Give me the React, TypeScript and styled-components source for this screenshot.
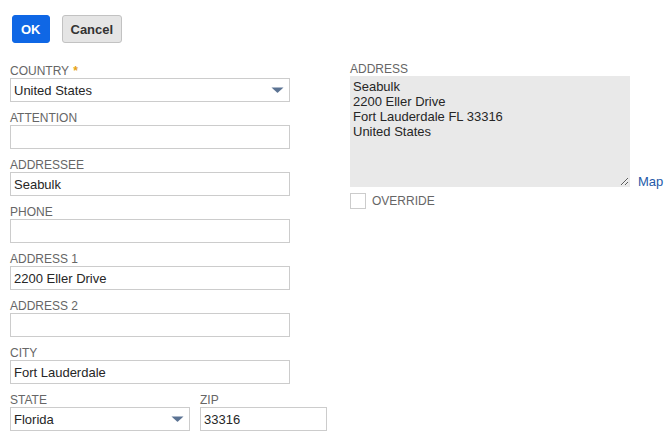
import React from "react";
import styled, { createGlobalStyle } from "styled-components";

const Global = createGlobalStyle`
  html, body { margin: 0; padding: 0; background: #fff; }
  body { font-family: "Liberation Sans", Arial, sans-serif; color: #262626; }
  * { box-sizing: border-box; }
`;

const Page = styled.div`
  padding: 15px 10px 0 10px;
`;

const Toolbar = styled.div`
  display: flex;
  gap: 12px;
  padding-left: 2px;
  height: 28px;
`;

const Button = styled.button<{ $primary?: boolean }>`
  height: 28px;
  padding: 0 8px;
  border-radius: 3px;
  font-family: "Liberation Sans", Arial, sans-serif;
  font-size: 13px;
  font-weight: bold;
  cursor: pointer;
  border: 1px solid ${(p) => (p.$primary ? "#0f67e5" : "#c2c2c2")};
  background: ${(p) => (p.$primary ? "#0f67e5" : "#e5e5e5")};
  color: ${(p) => (p.$primary ? "#ffffff" : "#333333")};
`;

const Columns = styled.div`
  display: flex;
  gap: 60px;
  margin-top: 19px;
`;

const LeftCol = styled.div`
  width: 280px;
  flex-shrink: 0;
  padding-top: 2px;
  display: flex;
  flex-direction: column;
  gap: 9px;
`;

const RightCol = styled.div`
  display: flex;
  flex-direction: column;
`;

const Field = styled.div<{ $width?: number }>`
  display: flex;
  flex-direction: column;
  flex-shrink: 0;
  width: ${(p) => (p.$width ? `${p.$width}px` : "100%")};
`;

const Label = styled.div`
  font-size: 12px;
  line-height: 14px;
  color: #666;
  text-transform: uppercase;
  white-space: nowrap;
`;

const Required = styled.span`
  color: #e6a213;
  font-weight: bold;
  margin-left: 4px;
`;

const TextInput = styled.input`
  height: 24px;
  width: 100%;
  border: 1px solid #ccc;
  padding: 0 3px;
  font-family: "Liberation Sans", Arial, sans-serif;
  font-size: 13px;
  color: #262626;
  background: #fff;
  outline: none;
`;

const Select = styled.div`
  height: 24px;
  width: 100%;
  border: 1px solid #ccc;
  padding: 0 5px 0 3px;
  display: flex;
  align-items: center;
  justify-content: space-between;
  font-size: 13px;
  color: #262626;
  background: #fff;
`;

const Row = styled.div`
  display: flex;
  gap: 10px;
`;

const AddressRow = styled.div`
  display: flex;
  align-items: flex-end;
  gap: 8px;
`;

const AddressBox = styled.textarea`
  width: 280px;
  height: 111px;
  border: 1px solid #e9e9e9;
  background: #e9e9e9;
  padding: 2px 2px;
  font-family: "Liberation Sans", Arial, sans-serif;
  font-size: 13px;
  line-height: 15px;
  color: #262626;
  outline: none;
  display: block;
`;

const MapLink = styled.a`
  font-size: 13px;
  line-height: 15px;
  color: #255aa8;
  text-decoration: none;
  margin-bottom: -2px;
`;

const CheckRow = styled.label`
  display: flex;
  align-items: center;
  gap: 6px;
  margin-top: 6px;
`;

const CheckBox = styled.span`
  width: 16px;
  height: 16px;
  border: 1px solid #ccc;
  background: #fff;
  display: inline-block;
`;

const Arrow = () => (
  <svg width="13" height="6" viewBox="0 0 13 6">
    <path d="M0.5 0.5 L12.5 0.5 L7 5.6 Q6.5 6 6 5.6 Z" fill="#5b7393" />
  </svg>
);

export default function App() {
  return (
    <>
      <Global />
      <Page>
        <Toolbar>
          <Button $primary>OK</Button>
          <Button>Cancel</Button>
        </Toolbar>
        <Columns>
          <LeftCol>
            <Field>
              <Label>
                Country<Required>*</Required>
              </Label>
              <Select>
                <span>United States</span>
                <Arrow />
              </Select>
            </Field>
            <Field>
              <Label>Attention</Label>
              <TextInput defaultValue="" />
            </Field>
            <Field>
              <Label>Addressee</Label>
              <TextInput defaultValue="Seabulk" />
            </Field>
            <Field>
              <Label>Phone</Label>
              <TextInput defaultValue="" />
            </Field>
            <Field>
              <Label>Address 1</Label>
              <TextInput defaultValue="2200 Eller Drive" />
            </Field>
            <Field>
              <Label>Address 2</Label>
              <TextInput defaultValue="" />
            </Field>
            <Field>
              <Label>City</Label>
              <TextInput defaultValue="Fort Lauderdale" />
            </Field>
            <Row>
              <Field $width={180}>
                <Label>State</Label>
                <Select>
                  <span>Florida</span>
                  <Arrow />
                </Select>
              </Field>
              <Field $width={127}>
                <Label>Zip</Label>
                <TextInput defaultValue="33316" />
              </Field>
            </Row>
          </LeftCol>
          <RightCol>
            <Label>Address</Label>
            <AddressRow>
              <AddressBox
                readOnly
                defaultValue={"Seabulk\n2200 Eller Drive\nFort Lauderdale FL 33316\nUnited States"}
              />
              <MapLink href="#">Map</MapLink>
            </AddressRow>
            <CheckRow>
              <CheckBox />
              <Label>Override</Label>
            </CheckRow>
          </RightCol>
        </Columns>
      </Page>
    </>
  );
}
